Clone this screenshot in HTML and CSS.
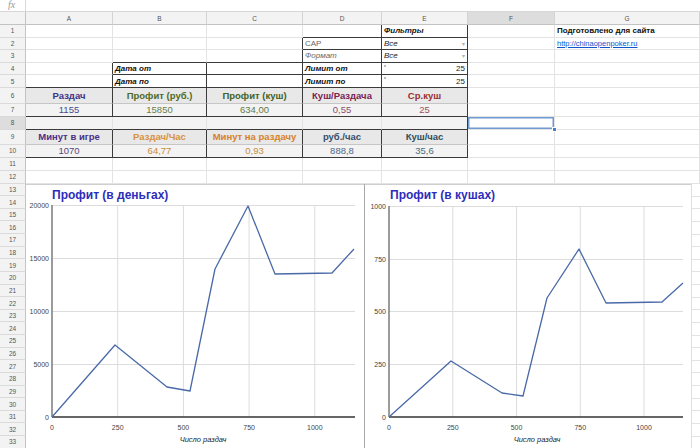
FILE: index.html
```html
<!DOCTYPE html>
<html lang="ru">
<head>
<meta charset="utf-8">
<title>Sheet</title>
<link rel="stylesheet" href="styles.css">
</head>
<body>
<div class="fbar"><div class="fx">fx</div><div class="fin"></div></div>
<div class="colhead">
  <div class="corner"></div><div>A</div><div>B</div><div>C</div><div>D</div><div>E</div><div class="sel">F</div><div>G</div>
</div>

<div class="row h5"><div class="rn">1</div><div class="c"></div><div class="c"></div><div class="c"></div><div class="c dr db"></div><div class="c dr db bi">Фильтры</div><div class="c"></div><div class="c b8">Подготовлено для сайта</div></div>
<div class="row h5"><div class="rn">2</div><div class="c"></div><div class="c"></div><div class="c dr"></div><div class="c dr db gray">CAP</div><div class="c dr db it dd"><span>Все</span><span class="arr">▾</span></div><div class="c"></div><div class="c"><span class="link">http://chinaopenpoker.ru</span></div></div>
<div class="row h5"><div class="rn">3</div><div class="c"></div><div class="c db"></div><div class="c dr db"></div><div class="c dr db it gray">Формат</div><div class="c dr db it dd"><span>Все</span><span class="arr">▾</span></div><div class="c"></div><div class="c"></div></div>
<div class="row h5"><div class="rn">4</div><div class="c dr"></div><div class="c dr db bi">Дата от</div><div class="c dr db"></div><div class="c dr db bi">Лимит от</div><div class="c dr db dd"><span class="mark"></span><span>25</span></div><div class="c"></div><div class="c"></div></div>
<div class="row h5"><div class="rn">5</div><div class="c dr db"></div><div class="c dr db bi">Дата по</div><div class="c dr db"></div><div class="c dr db bi">Лимит по</div><div class="c dr db dd"><span class="mark"></span><span>25</span></div><div class="c"></div><div class="c"></div></div>

<div class="row h6"><div class="rn">6</div><div class="c dr hd k1">Раздач</div><div class="c dr hd k2">Профит (руб.)</div><div class="c dr hd k3">Профит (куш)</div><div class="c dr hd k4">Куш/Раздача</div><div class="c dr hd k5">Ср.куш</div><div class="c"></div><div class="c"></div></div>
<div class="row h7"><div class="rn">7</div><div class="c dr db vl v1">1155</div><div class="c dr db vl v2">15850</div><div class="c dr db vl v3">634,00</div><div class="c dr db vl v4">0,55</div><div class="c dr db vl v5">25</div><div class="c"></div><div class="c"></div></div>
<div class="row h7"><div class="rn selr">8</div><div class="c db gap"></div><div class="c db gap"></div><div class="c db gap"></div><div class="c db gap"></div><div class="c dr db gap"></div><div class="c selc"><span class="handle"></span></div><div class="c"></div></div>
<div class="row h9"><div class="rn">9</div><div class="c dr hd k6">Минут в игре</div><div class="c dr hd k7">Раздач/Час</div><div class="c dr hd k8">Минут на раздачу</div><div class="c dr hd k9">руб./час</div><div class="c dr hd k10">Куш/час</div><div class="c"></div><div class="c"></div></div>
<div class="row h7"><div class="rn">10</div><div class="c dr db vl v6">1070</div><div class="c dr db vl v7">64,77</div><div class="c dr db vl v8">0,93</div><div class="c dr db vl v9">888,8</div><div class="c dr db vl v10">35,6</div><div class="c"></div><div class="c"></div></div>
<div class="row h11"><div class="rn">11</div><div class="c"></div><div class="c"></div><div class="c"></div><div class="c"></div><div class="c"></div><div class="c"></div><div class="c"></div></div>
<div class="row h11"><div class="rn">12</div><div class="c"></div><div class="c"></div><div class="c"></div><div class="c"></div><div class="c"></div><div class="c"></div><div class="c"></div></div>

<div class="lower">
  <div class="rownums">
    <div>13</div><div>14</div><div>15</div><div>16</div><div>17</div><div>18</div><div>19</div><div>20</div><div>21</div><div>22</div><div>23</div><div>24</div><div>25</div><div>26</div><div>27</div><div>28</div><div>29</div><div>30</div><div>31</div><div>32</div><div>33</div>
  </div>
  <div class="chart c1">
    <svg width="339" height="265" viewBox="0 0 339 265">
      <rect x="0" y="0" width="339" height="265" fill="#fff"/>
      <line x1="0" y1="0.5" x2="339" y2="0.5" stroke="#cfcfcf"/>
      <line x1="338.5" y1="0" x2="338.5" y2="265" stroke="#a9a9a9"/>
      <text x="26" y="15" class="ttl">Профит (в деньгах)</text>
      <g stroke="#dcdcdc" stroke-width="1">
        <line x1="91.7" y1="21" x2="91.7" y2="233"/>
        <line x1="157.4" y1="21" x2="157.4" y2="233"/>
        <line x1="223.1" y1="21" x2="223.1" y2="233"/>
        <line x1="288.8" y1="21" x2="288.8" y2="233"/>
        <line x1="26" y1="21.5" x2="329" y2="21.5"/>
        <line x1="26" y1="74.5" x2="329" y2="74.5"/>
        <line x1="26" y1="127.5" x2="329" y2="127.5"/>
        <line x1="26" y1="180.5" x2="329" y2="180.5"/>
      </g>
      <line x1="26" y1="21" x2="26" y2="233" stroke="#7a7a7a" stroke-width="1.5"/>
      <line x1="26" y1="233" x2="329" y2="233" stroke="#333" stroke-width="1.5"/>
      <g class="ax" text-anchor="end">
        <text x="23" y="24">20000</text>
        <text x="23" y="77">15000</text>
        <text x="23" y="130">10000</text>
        <text x="23" y="183">5000</text>
        <text x="23" y="236">0</text>
      </g>
      <g class="ax" text-anchor="middle">
        <text x="26" y="246">0</text>
        <text x="91.7" y="246">250</text>
        <text x="157.4" y="246">500</text>
        <text x="223.1" y="246">750</text>
        <text x="288.8" y="246">1000</text>
      </g>
      <text x="177" y="258" class="axt" text-anchor="middle">Число раздач</text>
      <polyline fill="none" stroke="#4a69a8" stroke-width="1.3" stroke-linejoin="round" points="26,233 89,161 141,203 164,207 189,85 222,22 249,90 306,89 328,65"/>
    </svg>
  </div>
  <div class="chart c2">
    <svg width="327" height="265" viewBox="0 0 327 265">
      <rect x="0" y="0" width="327" height="265" fill="#fff"/>
      <line x1="0" y1="0.5" x2="327" y2="0.5" stroke="#cfcfcf"/>
      <line x1="326.5" y1="0" x2="326.5" y2="265" stroke="#dedede"/>
      <text x="25" y="15" class="ttl">Профит (в кушах)</text>
      <g stroke="#dcdcdc" stroke-width="1">
        <line x1="87.75" y1="22" x2="87.75" y2="233"/>
        <line x1="151.5" y1="22" x2="151.5" y2="233"/>
        <line x1="215.25" y1="22" x2="215.25" y2="233"/>
        <line x1="279" y1="22" x2="279" y2="233"/>
        <line x1="24" y1="22.5" x2="318" y2="22.5"/>
        <line x1="24" y1="75.5" x2="318" y2="75.5"/>
        <line x1="24" y1="127.5" x2="318" y2="127.5"/>
        <line x1="24" y1="180.5" x2="318" y2="180.5"/>
      </g>
      <line x1="24" y1="22" x2="24" y2="233" stroke="#7a7a7a" stroke-width="1.5"/>
      <line x1="24" y1="233" x2="318" y2="233" stroke="#333" stroke-width="1.5"/>
      <g class="ax" text-anchor="end">
        <text x="21" y="25">1000</text>
        <text x="21" y="78">750</text>
        <text x="21" y="130">500</text>
        <text x="21" y="183">250</text>
        <text x="21" y="236">0</text>
      </g>
      <g class="ax" text-anchor="middle">
        <text x="24" y="246">0</text>
        <text x="87.75" y="246">250</text>
        <text x="151.5" y="246">500</text>
        <text x="215.25" y="246">750</text>
        <text x="279" y="246">1000</text>
      </g>
      <text x="172" y="258" class="axt" text-anchor="middle">Число раздач</text>
      <polyline fill="none" stroke="#4a69a8" stroke-width="1.3" stroke-linejoin="round" points="24,233 86,177 137,209 158,212 182,114 214,65 241,119 297,118 318,99"/>
    </svg>
  </div>
  <div class="gtail"></div>
</div>
</body>
</html>
```

FILE: styles.css
```css
body {
  margin: 0;
  width: 700px;
  height: 448px;
  overflow: hidden;
  background: #fff;
  font-family: "Liberation Sans", Arial, sans-serif;
}

.fbar {
  height: 12px;
  box-sizing: border-box;
  border-bottom: 1px solid #d6d6d6;
  display: flex;
}
.fx {
  width: 26px;
  box-sizing: border-box;
  border-right: 1px solid #d9d9d9;
  font-family: "Liberation Serif", serif;
  font-style: italic;
  font-size: 10px;
  color: #9a9a9a;
  padding-left: 8px;
  line-height: 10px;
}
.fin { flex: 1; }

.colhead, .row {
  display: grid;
  grid-template-columns: 26px 87px 94px 96px 79px 86px 87px 145px;
}
.colhead { height: 13px; }
.colhead div {
  box-sizing: border-box;
  background: #f3f3f3;
  border-right: 1px solid #d4d4d4;
  border-bottom: 1px solid #c3c3c3;
  font-size: 6.5px;
  color: #555;
  display: flex;
  align-items: center;
  justify-content: center;
}
.colhead .sel { background: #dddddd; }
.colhead .corner { border-right-color: #c3c3c3; }

.h5 { height: 12.6px; }
.h6 { height: 16px; }
.h7 { height: 13px; }
.h9 { height: 15px; }
.h11 { height: 12.8px; }

.rn {
  box-sizing: border-box;
  background: #f3f3f3;
  border-right: 1px solid #c3c3c3;
  border-bottom: 1px solid #dadada;
  font-size: 6.5px;
  color: #555;
  display: flex;
  align-items: center;
  justify-content: center;
}
.rn.selr { background: #dddddd; }

.c {
  box-sizing: border-box;
  border-right: 1px solid #e3e3e3;
  border-bottom: 1px solid #e3e3e3;
  display: flex;
  align-items: center;
  padding: 0 2px;
  white-space: nowrap;
  overflow: hidden;
  font-size: 8px;
  color: #222;
}
.dr { border-right-color: #3a3a3a; }
.db { border-bottom-color: #3a3a3a; }
.bi { font-weight: bold; font-style: italic; color: #111; }
.it { font-style: italic; }
.gray { color: #666; }
.b8 { font-weight: bold; color: #111; }
.link { color: #1155cc; text-decoration: underline; font-size: 7.5px; }
.dd { justify-content: space-between; }
.arr { font-size: 6px; color: #b0b0b0; font-style: normal; }
.mark {
  width: 2px;
  height: 2px;
  background: #bdbdbd;
  align-self: flex-start;
  margin-top: 2px;
}

.hd {
  background: #e8e8e8;
  justify-content: center;
  font-weight: bold;
  font-size: 9.5px;
  border-bottom-color: #c6c6c6;
}
.vl {
  background: #f3f3f3;
  justify-content: center;
  font-size: 9.5px;
}
.gap { background: #f3f3f3; }

.k1 { color: #3a3487; }
.k2 { color: #4f6a24; }
.k3 { color: #3f6226; }
.k4 { color: #7a2250; }
.k5 { color: #9a2f35; }
.k6 { color: #4d2f86; }
.k7 { color: #d8913c; }
.k8 { color: #d6812b; }
.k9 { color: #344f6f; }
.k10 { color: #2d4f5f; }
.v1 { color: #4a4a88; }
.v2 { color: #68804a; }
.v3 { color: #5f7a48; }
.v4 { color: #8d4c6e; }
.v5 { color: #a0505a; }
.v6 { color: #554880; }
.v7 { color: #c98b40; }
.v8 { color: #c98b40; }
.v9 { color: #4f6887; }
.v10 { color: #4e6b79; }

.selc {
  position: relative;
  overflow: visible;
  box-shadow: inset 0 0 0 1.5px #6f9ad4;
}
.handle {
  position: absolute;
  right: -3px;
  bottom: -3px;
  width: 5px;
  height: 5px;
  background: #4a7cc9;
  border: 1px solid #fff;
  box-sizing: border-box;
  z-index: 2;
}

.lower {
  display: flex;
  height: 265px;
}
.rownums {
  width: 26px;
  display: flex;
  flex-direction: column;
}
.rownums div {
  box-sizing: border-box;
  height: 12.63px;
  flex: none;
  background: #f3f3f3;
  border-right: 1px solid #c3c3c3;
  border-bottom: 1px solid #dadada;
  font-size: 6.5px;
  color: #555;
  display: flex;
  align-items: center;
  justify-content: center;
}
.chart svg { display: block; }
.c1 { width: 339px; }
.c2 { width: 327px; }
.gtail {
  width: 8px;
  background: repeating-linear-gradient(to bottom, #fff 0, #fff 11.63px, #e3e3e3 11.63px, #e3e3e3 12.63px);
}

.ttl {
  font-family: "Liberation Sans", Arial, sans-serif;
  font-weight: bold;
  font-size: 12px;
  fill: #2d2dbb;
}
.ax {
  font-family: "Liberation Sans", Arial, sans-serif;
  font-size: 7px;
  fill: #444;
}
.axt {
  font-family: "Liberation Sans", Arial, sans-serif;
  font-size: 7.5px;
  font-style: italic;
  fill: #222;
}
```
